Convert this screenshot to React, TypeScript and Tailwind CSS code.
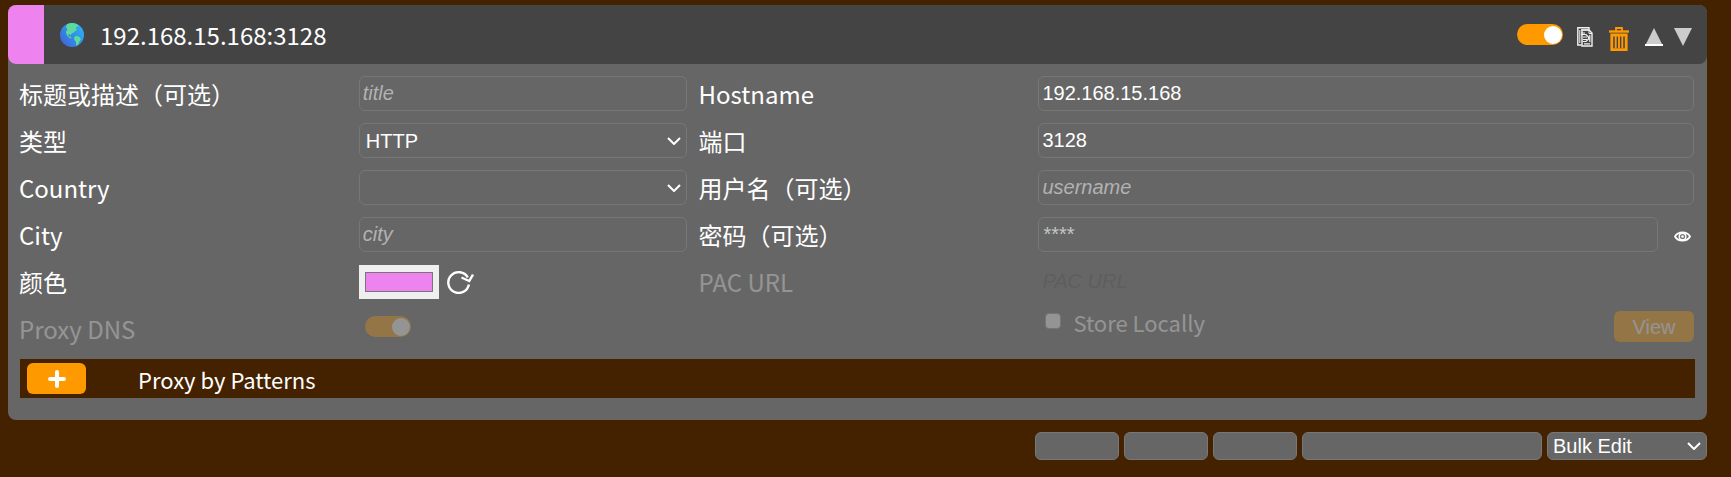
import React, { useState } from 'react';

const fieldClass =
  'block h-[35px] w-full min-w-0 rounded-md border border-[#777] bg-transparent px-[3px] font-["Liberation_Sans",sans-serif] text-[20px] text-white outline-none placeholder:italic placeholder:text-[#b2b2b2]';

const labelClass = 'leading-[35px]';

interface ToggleProps {
  id: string;
  label?: string;
  disabled?: boolean;
}

const Toggle: React.FC<ToggleProps> = ({ id, label, disabled }) => (
  <input
    id={id}
    type="checkbox"
    defaultChecked
    disabled={disabled}
    aria-label={label}
    className="flex h-[21px] w-[46px] shrink-0 appearance-none items-center rounded-full bg-[#aaa] px-px before:size-[18px] before:rounded-full before:bg-white checked:justify-end checked:bg-[#ff9900]"
  />
);

interface TextFieldProps {
  id: string;
  label: string;
  value?: string;
  placeholder?: string;
}

const TextField: React.FC<TextFieldProps> = ({ id, label, value, placeholder }) => (
  <>
    <label htmlFor={id} className={labelClass}>{label}</label>
    <input id={id} type="text" defaultValue={value} placeholder={placeholder} className={fieldClass} />
  </>
);

const Chevron = () => (
  <svg viewBox="0 0 14 8" className="pointer-events-none absolute right-[6px] top-1/2 h-2 w-[14px] -translate-y-1/2" fill="none" stroke="white" strokeWidth="2">
    <path d="M1 1l6 6 6-6" />
  </svg>
);

interface SelectFieldProps {
  id: string;
  label: string;
  options: string[];
}

const SelectField: React.FC<SelectFieldProps> = ({ id, label, options }) => (
  <>
    <label htmlFor={id} className={labelClass}>{label}</label>
    <div className="relative">
      <select
        id={id}
        className='block h-[35px] w-full appearance-none rounded-md border border-[#777] bg-transparent px-[6px] font-["Liberation_Sans",sans-serif] text-[20px] text-white outline-none'
      >
        {options.map(option => (
          <option key={option}>{option}</option>
        ))}
      </select>
      <Chevron />
    </div>
  </>
);

const Globe = () => (
  <svg viewBox="0 0 24 24" className="size-6 shrink-0">
    <defs>
      <linearGradient id="sea" x1="1" y1="0.2" x2="0.1" y2="0.9">
        <stop offset="0" stopColor="#2bb3f5" />
        <stop offset="1" stopColor="#3f66d8" />
      </linearGradient>
    </defs>
    <circle cx="12" cy="12" r="12" fill="url(#sea)" />
    <path
      d="M7 1.200C10 -.2 14 -.3 17 1.200L19 3l-2.500.8-.6 1.700 1.300 1.200-2 1.300-1.900 1.800-1.800.8-.6 1.900-1.500-1.500-1.200 1 .9 1.500 1.800.3.8 1.700-2.400-.8L7 12.200 5.800 9 7.500 6.500 6 4z"
      fill="#5cdb9c"
    />
    <path d="M14.200 14l2.300-1.200 3.300 1.400 1 2-1.600 2.500-1 3-1.800 1-.5-4-1.700-2.200z" fill="#5cdb9c" />
  </svg>
);

const CopyIcon = () => (
  <svg viewBox="0 0 16 20" className="h-5 w-4" fill="none" stroke="#f2f2f2" strokeWidth="1.400">
    <path d="M4.500 18H.8V.8H12v2" />
    <path d="M5 3h7l3 3v13H5z" />
    <path d="M2.800 3v13M4 3h8M4 6h4M12 3v3.500h3" strokeWidth="1" />
    <path d="M4 7.500h5l2.500 2.500v2L9 14.500H5.500M6 10h4M6 12.500h4M7 16.800h6M12.800 8v7" strokeWidth="1.200" />
  </svg>
);

const TrashIcon = () => (
  <svg viewBox="0 0 20 24" className="h-6 w-5" fill="none" stroke="#ff9900">
    <path d="M0 4.500h20" strokeWidth="2.400" />
    <path d="M7 4V1h6v3" strokeWidth="1.800" />
    <path d="M2.800 8v14.700h14.400V8z" strokeWidth="2.800" />
    <path d="M6.700 9v12M10 9v12M13.300 9v12" strokeWidth="1.900" />
  </svg>
);

const App: React.FC = () => {
  const [color, setColor] = useState('#ee82ee');

  return (
    <main className='min-h-screen bg-[#442200] pt-[5px] pr-6 pb-4 pl-2 font-["Noto_Sans_CJK_SC",sans-serif] text-[24px] text-white'>
      <section className="rounded-lg bg-[#666]">
        <header className="flex h-[59px] items-center rounded-lg bg-[#444] pr-[15px]">
          <span className="mr-4 h-full w-9 rounded-l-lg" style={{ backgroundColor: color }}></span>
          <Globe />
          <h1 className="ml-4 flex-1 leading-[35px]">192.168.15.168:3128</h1>
          <div className="flex items-center">
            <Toggle id="active" label="Active" />
            <button type="button" aria-label="Duplicate" className="mt-1 ml-[14px]"><CopyIcon /></button>
            <button type="button" aria-label="Delete" className="mt-2 ml-4"><TrashIcon /></button>
            <button type="button" aria-label="Move up" className="mt-1 ml-4">
              <svg viewBox="0 0 18 18" className="size-[18px]">
                <path d="M9 0l9 18H0z" fill="#ccc" />
                <path d="M0 17h18" stroke="white" strokeWidth="2" />
              </svg>
            </button>
            <button type="button" aria-label="Move down" className="mt-1 ml-[11px]">
              <svg viewBox="0 0 18 18" className="size-[18px]">
                <path d="M0 0h18L9 18z" fill="#ccc" />
              </svg>
            </button>
          </div>
        </header>

        <div className="grid grid-cols-[1fr_1fr_1fr_2fr] gap-3 pt-3 pr-[13px] pl-[11px]">
          <TextField id="title" label="标题或描述（可选）" placeholder="title" />
          <TextField id="hostname" label="Hostname" value="192.168.15.168" />

          <SelectField id="type" label="类型" options={['HTTP']} />
          <TextField id="port" label="端口" value="3128" />

          <SelectField id="country" label="Country" options={['']} />
          <TextField id="username" label="用户名（可选）" placeholder="username" />

          <TextField id="city" label="City" placeholder="city" />
          <label htmlFor="password" className={labelClass}>密码（可选）</label>
          <div className="flex items-center gap-4 pr-[3px]">
            <input
              id="password"
              type="password"
              placeholder="****"
              className='h-[35px] min-w-0 flex-1 rounded-md border border-[#777] bg-transparent px-1 font-["Liberation_Sans",sans-serif] text-[20px] text-white outline-none placeholder:text-[#c4c4c4]'
            />
            <button type="button" aria-label="Show password" className="mt-1">
              <svg viewBox="0 0 17 11" className="h-[11px] w-[17px]">
                <path d="M1 5.500C4 0 13 0 16 5.500 13 11 4 11 1 5.500z" fill="none" stroke="white" strokeWidth="1.800" />
                <circle cx="8.500" cy="5.500" r="4" fill="white" />
                <circle cx="8.500" cy="5.500" r="2.600" fill="#777" />
                <circle cx="8.500" cy="5.500" r="1.300" fill="white" />
              </svg>
            </button>
          </div>

          <label htmlFor="color" className={labelClass}>颜色</label>
          <div className="flex h-[35px] items-end gap-2">
            <input
              id="color"
              type="color"
              value={color}
              onChange={e => setColor(e.target.value)}
              className="h-[34px] w-20 appearance-none bg-[#efefef] px-[6px] py-[7px] [&::-webkit-color-swatch]:rounded-none [&::-webkit-color-swatch]:border-[#777] [&::-webkit-color-swatch-wrapper]:p-0"
            />
            <button type="button" aria-label="Reset color" onClick={() => setColor('#ee82ee')} className="self-center">
              <svg viewBox="0 0 27 24" className="h-6 w-[27px]" fill="none" stroke="white" strokeWidth="2.400">
                <path d="M20.800 7.500A10.400 10.400 0 1 0 21.900 14.500" />
                <path d="M14.500 7.500l7.700 3.500L26 4.500" />
              </svg>
            </button>
          </div>
          <label htmlFor="pac" className="leading-[35px] opacity-30">PAC URL</label>
          <input
            id="pac"
            type="text"
            disabled
            placeholder="PAC URL"
            className='h-[35px] w-full min-w-0 bg-transparent px-1 font-["Liberation_Sans",sans-serif] text-[20px] placeholder:text-[#5e5e5e] placeholder:italic'
          />

          <label htmlFor="proxy-dns" className="leading-9 opacity-30">Proxy DNS</label>
          <div className="px-[6px] py-[5px] opacity-30">
            <Toggle id="proxy-dns" disabled />
          </div>
          <div className="col-start-4 flex items-start justify-between opacity-30">
            <label className="flex items-start gap-3 pl-[7px] text-[22px] leading-[22px]">
              <input type="checkbox" disabled className="mt-[2px] size-4 appearance-none rounded-sm border border-[#999] bg-white" />
              Store Locally
            </label>
            <button type="button" disabled className='h-[31px] w-20 rounded-md bg-[#ff9900] font-["Liberation_Sans",sans-serif] text-[20px] leading-none'>
              View
            </button>
          </div>
        </div>

        <div className="px-3 pt-3 pb-[22px]">
          <div className="flex h-[39px] items-center gap-[52px] bg-[#442200] px-[7px]">
            <button type="button" aria-label="Add pattern" className="flex h-[31px] w-[59px] items-center justify-center rounded-md bg-[#ff9900]">
              <svg viewBox="0 0 18 18" className="size-[18px]" stroke="white" strokeWidth="4" strokeLinecap="round">
                <path d="M9 2v14M2 9h14" />
              </svg>
            </button>
            <h2 className="text-[22px] leading-8">Proxy by Patterns</h2>
          </div>
        </div>
      </section>

      <footer className='mt-3 flex justify-end gap-[5px] font-["Liberation_Sans",sans-serif] text-[20px]'>
        <input type="text" aria-label="Target" className="h-7 w-[84px] rounded-md border border-[#777] bg-[#666] px-1" />
        <input type="text" aria-label="From" className="h-7 w-[84px] rounded-md border border-[#777] bg-[#666] px-1" />
        <input type="text" aria-label="To" className="h-7 w-[84px] rounded-md border border-[#777] bg-[#666] px-1" />
        <input type="text" aria-label="Value" className="h-7 w-60 rounded-md border border-[#777] bg-[#666] px-1" />
        <div className="relative">
          <select aria-label="Bulk Edit" className="block h-7 w-40 appearance-none rounded-md border border-[#777] bg-[#666] px-[5px] leading-none text-white">
            <option>Bulk Edit</option>
          </select>
          <Chevron />
        </div>
      </footer>
    </main>
  );
};

export default App;
